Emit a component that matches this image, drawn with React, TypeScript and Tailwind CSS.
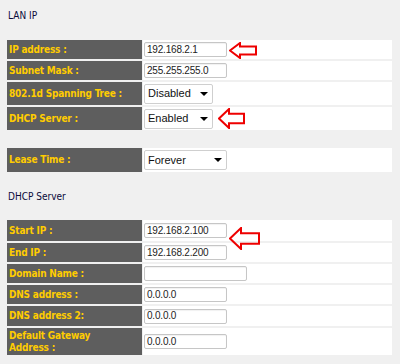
import React from "react";

function Arrow({ className, w, h }: { className: string; w: number; h: number }) {
  const hx = Math.round(w * 0.4);
  const t = h * 0.27;
  const b = h * 0.73;
  const pts = `1,${h / 2} ${hx},1 ${hx},${t} ${w - 1},${t} ${w - 1},${b} ${hx},${b} ${hx},${h - 1}`;
  return (
    <svg className={className} width={w} height={h} viewBox={`0 0 ${w} ${h}`}>
      <polygon points={pts} fill="none" stroke="#ee0000" strokeWidth="2" strokeLinejoin="miter" />
    </svg>
  );
}

function Row({ label, h, children }: { label: React.ReactNode; h: string; children: React.ReactNode }) {
  return (
    <div className={`flex gap-[1px] ${h}`}>
      <div className="w-[135px] shrink-0 bg-[#5e5e5e] text-[#ffcc00] font-bold text-[10px] leading-[12px] tracking-[-0.2px] pl-[2px] flex items-center font-['DejaVu_Sans_Condensed','DejaVu_Sans',sans-serif] [font-stretch:condensed]">
        <span>{label}</span>
      </div>
      <div className="flex-1 bg-white flex items-center pl-[1px] relative">{children}</div>
    </div>
  );
}

function TextBox({ value, wide }: { value: string; wide?: boolean }) {
  return (
    <div
      className={`${wide ? "w-[103px]" : "w-[83px]"} h-[15px] border border-[#c6c6c6] rounded-[2px] bg-white flex items-center px-[2px] text-[10px] leading-none text-[#222] tracking-[-0.2px] font-['Liberation_Sans',Arial,sans-serif] shadow-[inset_0_1px_1px_rgba(0,0,0,0.06)]`}
    >
      {value}
    </div>
  );
}

function Select({ value, wide }: { value: string; wide?: boolean }) {
  return (
    <div
      className={`${wide ? "w-[83px]" : "w-[69px]"} h-[20px] border border-[#cfcfcf] rounded-[2px] bg-white flex items-center justify-between pl-[3px] pr-[3px] text-[11px] leading-none text-[#111] font-['Liberation_Sans',Arial,sans-serif]`}
    >
      <span>{value}</span>
      <span className="w-0 h-0 border-l-[4px] border-r-[4px] border-t-[4px] border-l-transparent border-r-transparent border-t-black mr-[1px]" />
    </div>
  );
}

export default function App() {
  return (
    <div className="w-[400px] h-[364px] bg-[#f0f0f0] overflow-hidden pt-[10px]">
      <div className="ml-[8px] h-[12px] text-[10px] leading-[12px] text-[#0a0a3a] font-['DejaVu_Sans_Condensed','DejaVu_Sans',sans-serif] [font-stretch:condensed]">
        LAN IP
      </div>

      <div className="ml-[7px] w-[385px] mt-[18px] flex flex-col gap-[2px]">
        <Row label="IP address :" h="h-[19px]">
          <TextBox value="192.168.2.1" />
          <Arrow className="absolute left-[86px] top-[2px]" w={28} h={17} />
        </Row>
        <Row label="Subnet Mask :" h="h-[19px]">
          <TextBox value="255.255.255.0" />
        </Row>
        <Row label="802.1d Spanning Tree :" h="h-[23px]">
          <Select value="Disabled" />
        </Row>
        <Row label="DHCP Server :" h="h-[23px]">
          <Select value="Enabled" />
          <Arrow className="absolute left-[75px] top-[1px]" w={27} h={21} />
        </Row>
      </div>

      <div className="ml-[7px] w-[385px] mt-[18px] flex flex-col">
        <Row label="Lease Time :" h="h-[24px]">
          <Select value="Forever" wide />
        </Row>
      </div>

      <div className="ml-[8px] mt-[19px] h-[12px] text-[10px] leading-[12px] text-[#0a0a3a] font-['DejaVu_Sans_Condensed','DejaVu_Sans',sans-serif] [font-stretch:condensed]">
        DHCP Server
      </div>

      <div className="ml-[7px] w-[385px] mt-[17px] flex flex-col gap-[2px]">
        <Row label="Start IP :" h="h-[21px]">
          <TextBox value="192.168.2.100" />
          <Arrow className="absolute left-[86px] top-[7px] z-10" w={31} h={23} />
        </Row>
        <Row label="End IP :" h="h-[19px]">
          <TextBox value="192.168.2.200" />
        </Row>
        <Row label="Domain Name :" h="h-[19px]">
          <TextBox value="" wide />
        </Row>
        <Row label="DNS address :" h="h-[19px]">
          <TextBox value="0.0.0.0" />
        </Row>
        <Row label="DNS address 2:" h="h-[20px]">
          <TextBox value="0.0.0.0" />
        </Row>
        <Row
          label={
            <>
              Default Gateway
              <br />
              Address :
            </>
          }
          h="h-[27px]"
        >
          <TextBox value="0.0.0.0" />
        </Row>
      </div>
    </div>
  );
}
